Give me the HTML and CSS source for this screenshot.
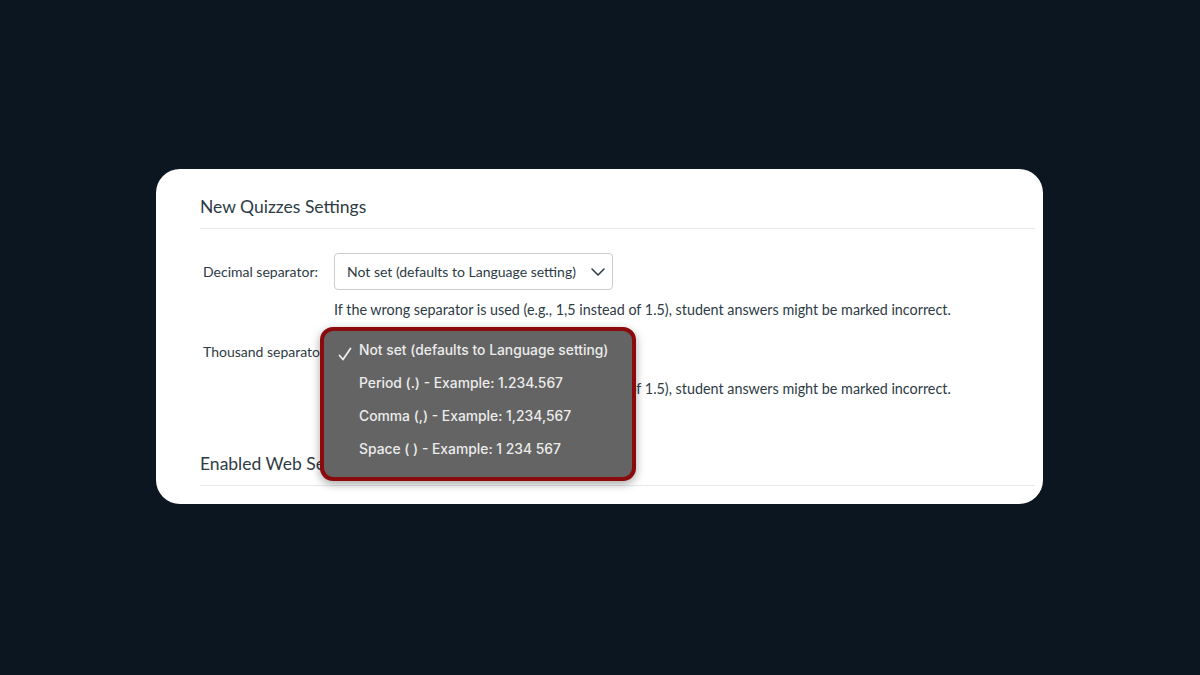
FILE: index.html
```html
<!DOCTYPE html>
<html>
<head>
<meta charset="utf-8">
<link rel="stylesheet" href="styles.css">
</head>
<body>
<div class="stage">
  <div class="card">
    <h2 class="section-title">New Quizzes Settings</h2>
    <div class="field">
      <div class="field-row">
        <span class="field-label">Decimal separator:</span>
        <div class="select">
          <span>Not set (defaults to Language setting)</span>
          <svg class="chev" width="14" height="8" viewBox="0 0 14 8"><path d="M1 1 L7 7 L13 1" fill="none" stroke="#2d3b45" stroke-width="1.5" stroke-linecap="round" stroke-linejoin="round"/></svg>
        </div>
      </div>
      <p class="help">If the wrong separator is used (e.g., 1,5 instead of 1.5), student answers might be marked incorrect.</p>
    </div>
    <div class="field second">
      <div class="field-row">
        <span class="field-label">Thousand separator:</span>
        <div class="select">
          <span>Not set (defaults to Language setting)</span>
          <svg class="chev" width="14" height="8" viewBox="0 0 14 8"><path d="M1 1 L7 7 L13 1" fill="none" stroke="#2d3b45" stroke-width="1.5" stroke-linecap="round" stroke-linejoin="round"/></svg>
        </div>
      </div>
      <p class="help">If the wrong separator is used (e.g., 1,5 instead of 1.5), student answers might be marked incorrect.</p>
    </div>
    <h2 class="section-title next">Enabled Web Services</h2>

    <div class="menu">
      <ul class="menu-list">
        <li class="menu-item checked">
          <svg class="check" width="14" height="14" viewBox="0 0 14 14"><path d="M1.5 8.5 L5 12.5 L12.5 1.5" fill="none" stroke="#ededed" stroke-width="1.8" stroke-linecap="round" stroke-linejoin="round"/></svg>
          Not set (defaults to Language setting)</li>
        <li class="menu-item">Period (.) - Example: 1.234.567</li>
        <li class="menu-item">Comma (,) - Example: 1,234,567</li>
        <li class="menu-item">Space ( ) - Example: 1 234 567</li>
      </ul>
    </div>
  </div>
</div>
</body>
</html>
```
FILE: styles.css
```css
html, body {
  margin: 0;
  padding: 0;
  background: #0c1620;
  width: 1200px;
  height: 675px;
  overflow: hidden;
}
.stage {
  padding: 169px 0 0 156px;
}
.card {
  position: relative;
  width: 887px;
  height: 335px;
  box-sizing: border-box;
  background: #ffffff;
  border-radius: 24px;
  padding: 26px 8px 0 44px;
  font-family: Lato, "Liberation Sans", sans-serif;
  color: #2d3b45;
}
.section-title {
  margin: 0;
  font-size: 17.5px;
  font-weight: 400;
  line-height: 24px;
  padding-bottom: 9px;
  border-bottom: 1px solid #e6e8ea;
  color: #2d3b45;
}
.section-title.next {
  margin-top: 53px;
}
.field {
  margin-top: 24px;
}
.field.second {
  margin-top: 13px;
}
.field-row {
  display: flex;
  align-items: center;
}
.field-label {
  width: 134px;
  padding-left: 3px;
  box-sizing: border-box;
  font-size: 14px;
  line-height: 20px;
}
.select {
  width: 279px;
  height: 37px;
  box-sizing: border-box;
  border: 1px solid #c7cdd1;
  border-radius: 4px;
  display: flex;
  align-items: center;
  justify-content: space-between;
  padding: 0 7px 0 12px;
  font-size: 14px;
}
.help {
  margin: 10px 0 0 134px;
  font-size: 14.35px;
  line-height: 20px;
}
.field.second .help {
  margin-top: 9px;
}
.menu {
  position: absolute;
  left: 164px;
  top: 158px;
  width: 316px;
  height: 154px;
  box-sizing: border-box;
  border: 4px solid #8b0a0c;
  border-radius: 13px;
  background: #646464;
  box-shadow: 0 3px 10px rgba(0,0,0,0.35);
  font-family: Inter, "Noto Sans", sans-serif;
}
.menu-list {
  list-style: none;
  margin: 0;
  padding: 3px 0 0 35px;
}
.menu-item {
  position: relative;
  height: 33px;
  line-height: 33px;
  font-size: 13.85px;
  font-weight: 500;
  color: #ececec;
  white-space: nowrap;
}
.check {
  position: absolute;
  left: -21px;
  top: 13px;
}
```
